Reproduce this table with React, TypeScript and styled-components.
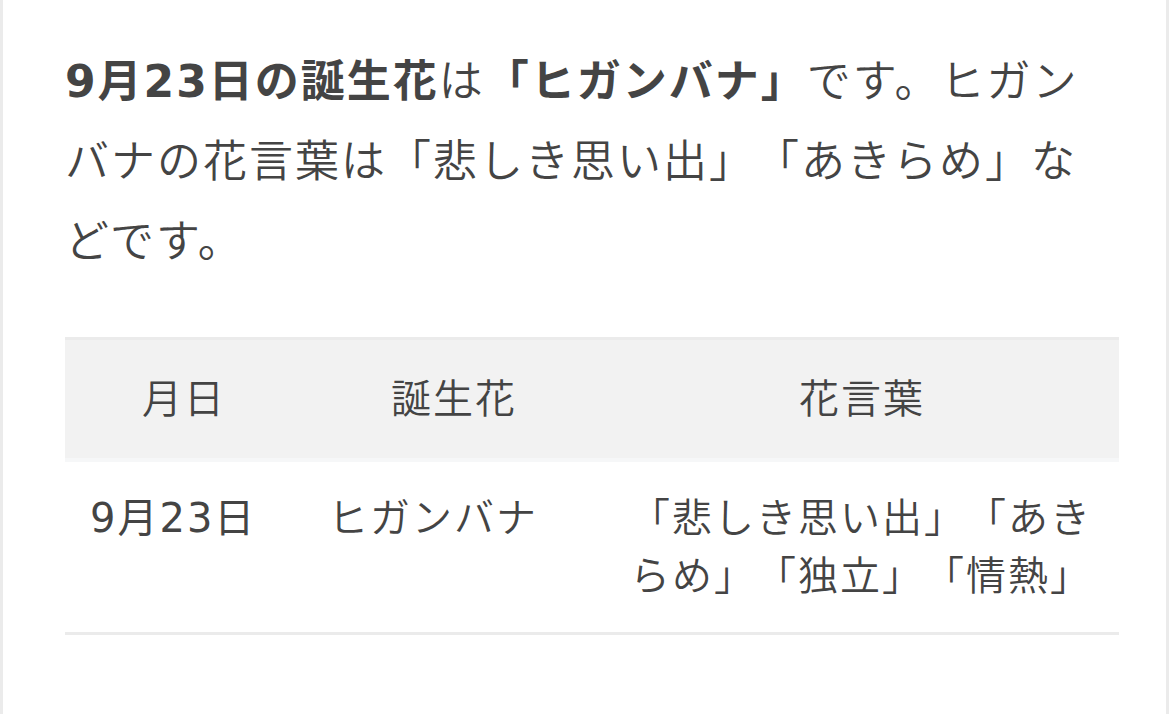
import styled, { createGlobalStyle } from "styled-components";

const rows = [
  {
    date: "9月23日",
    flower: "ヒガンバナ",
    words: "「悲しき思い出」「あきらめ」「独立」「情熱」",
  },
];

export default function App() {
  return (
    <>
      <GlobalStyle />
      <Page>
        <Lead>
          <strong>9月23日の誕生花</strong>は<strong>「ヒガンバナ」</strong>
          です。ヒガンバナの花言葉は「悲しき思い出」「あきらめ」などです。
        </Lead>

        <FlowerTable>
          <colgroup>
            <col style={{ width: 238 }} />
            <col style={{ width: 302 }} />
            <col />
          </colgroup>
          <thead>
            <tr>
              <HeadCell>月日</HeadCell>
              <HeadCell>誕生花</HeadCell>
              <HeadCell>花言葉</HeadCell>
            </tr>
          </thead>
          <tbody>
            {rows.map((row) => (
              <tr key={row.date}>
                <BodyCell $numeric>{row.date}</BodyCell>
                <BodyCell>{row.flower}</BodyCell>
                <BodyCell>{row.words}</BodyCell>
              </tr>
            ))}
          </tbody>
        </FlowerTable>
      </Page>
    </>
  );
}

const GlobalStyle = createGlobalStyle`
  html, body {
    margin: 0;
    padding: 0;
    background: #fff;
  }

  body {
    font-family: "DejaVu Sans", "Noto Sans CJK JP", sans-serif;
    font-weight: 350;
    color: #444;
    text-spacing-trim: space-all;
  }
`;

const Page = styled.main`
  box-sizing: border-box;
  width: 1169px;
  min-height: 714px;

  border-left: 3px solid #ebebeb;
  border-right: 3px solid #ebebeb;

  padding: 42px 47px 0 62px;
`;

const Lead = styled.p`
  margin: 0 0 55px;

  font-size: 44px;
  line-height: 80px;
  letter-spacing: 2px;

  & strong {
    font-weight: 700;
  }
`;

const FlowerTable = styled.table`
  width: 100%;
  table-layout: fixed;
  border-collapse: collapse;

  font-size: 40px;
  line-height: 58px;
  letter-spacing: 2px;

  border-top: 3px solid #ebebeb;
  border-bottom: 3px solid #ebebeb;
`;

const HeadCell = styled.th`
  padding: 30px 25px;

  background: #f2f2f2;
  border-bottom: 4px solid #f6f7f8;

  font-weight: inherit;
  text-align: center;
`;

const BodyCell = styled.td<{ $numeric?: boolean }>`
  padding: 27px 20px 27px 25px;

  vertical-align: top;
  text-align: left;
  font-weight: ${(p) => (p.$numeric ? 400 : "inherit")};
`;
